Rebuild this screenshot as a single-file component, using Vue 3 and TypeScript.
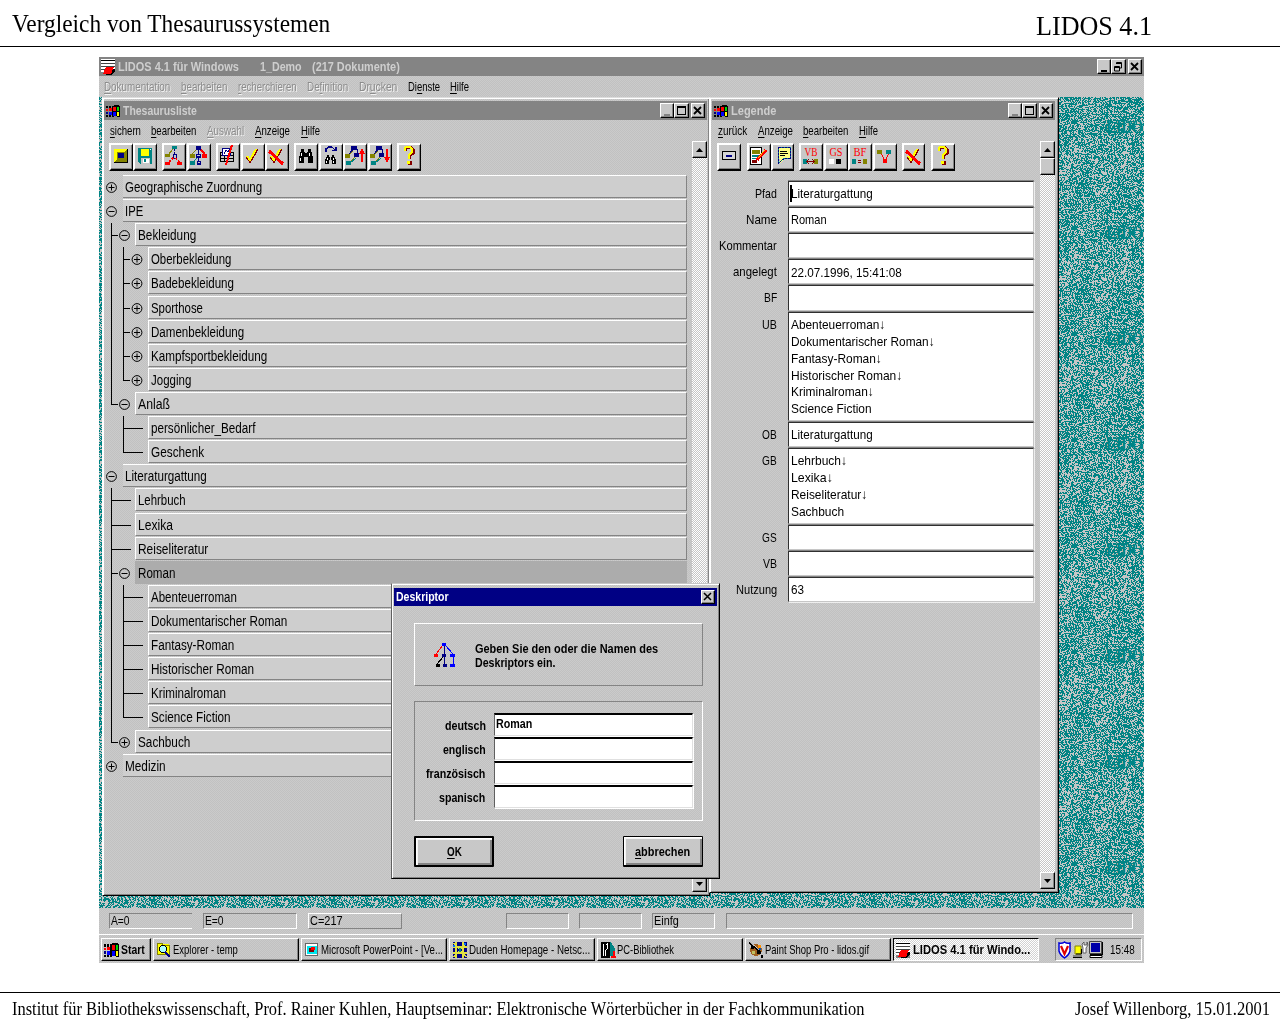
<script setup lang="ts">
interface MenuItem { pre: string; key: string; post: string; w: number; off?: boolean }
interface Node { t: string; w: number; level: number; sign?: '+' | '-'; last?: boolean; through?: boolean; selected?: boolean }

// Condenses a label horizontally to the pixel width given, keeping its place in the flow.
const vFit = {
  mounted(el: HTMLElement, binding: { value: number }) {
    const natural = el.offsetWidth
    el.style.transform = `scaleX(${binding.value / natural})`
    el.style.marginRight = `${binding.value - natural}px`
  },
}

const m = (pre: string, key: string, post: string, w: number, off = false): MenuItem => ({ pre, key, post, w, off })

const mainMenu = [
  m('', 'D', 'okumentation', 66, true), m('', 'b', 'earbeiten', 46, true), m('', 'r', 'echerchieren', 59, true),
  m('De', 'f', 'inition', 41, true), m('Dr', 'u', 'cken', 38, true), m('Di', 'e', 'nste', 32), m('', 'H', 'ilfe', 19),
]
const listMenu = [
  m('', 's', 'ichern', 31), m('', 'b', 'earbeiten', 45), m('', 'A', 'uswahl', 37, true), m('', 'A', 'nzeige', 35), m('', 'H', 'ilfe', 19),
]
const legendMenu = [m('', 'z', 'urück', 29), m('', 'A', 'nzeige', 35), m('', 'b', 'earbeiten', 45), m('', 'H', 'ilfe', 19)]

const nodes: Node[] = [
  { t: 'Geographische Zuordnung', w: 137, level: 0, sign: '+' },
  { t: 'IPE', w: 18, level: 0, sign: '-' },
  { t: 'Bekleidung', w: 58, level: 1, sign: '-' },
  { t: 'Oberbekleidung', w: 80, level: 2, sign: '+', through: true },
  { t: 'Badebekleidung', w: 83, level: 2, sign: '+', through: true },
  { t: 'Sporthose', w: 52, level: 2, sign: '+', through: true },
  { t: 'Damenbekleidung', w: 93, level: 2, sign: '+', through: true },
  { t: 'Kampfsportbekleidung', w: 116, level: 2, sign: '+', through: true },
  { t: 'Jogging', w: 40, level: 2, sign: '+', last: true, through: true },
  { t: 'Anlaß', w: 32, level: 1, sign: '-', last: true },
  { t: 'persönlicher_Bedarf', w: 104, level: 2 },
  { t: 'Geschenk', w: 53, level: 2, last: true },
  { t: 'Literaturgattung', w: 82, level: 0, sign: '-' },
  { t: 'Lehrbuch', w: 48, level: 1 },
  { t: 'Lexika', w: 35, level: 1 },
  { t: 'Reiseliteratur', w: 70, level: 1 },
  { t: 'Roman', w: 37, level: 1, sign: '-', selected: true },
  { t: 'Abenteuerroman', w: 86, level: 2, through: true },
  { t: 'Dokumentarischer Roman', w: 136, level: 2, through: true },
  { t: 'Fantasy-Roman', w: 83, level: 2, through: true },
  { t: 'Historischer Roman', w: 103, level: 2, through: true },
  { t: 'Kriminalroman', w: 75, level: 2, through: true },
  { t: 'Science Fiction', w: 80, level: 2, last: true, through: true },
  { t: 'Sachbuch', w: 52, level: 1, sign: '+', last: true },
  { t: 'Medizin', w: 41, level: 0, sign: '+' },
]
const gutter = [19, 31, 44]
const knob = [7.5, 20.5, 33]
const stem = [0, 7, 19]

const r = (x: number, y: number, w: number, h: number, f: string) => `<rect x="${x}" y="${y}" width="${w}" height="${h}" fill="${f}"/>`
const l = (d: string, c: string, w = 1, extra = '') => `<path d="${d}" fill="none" stroke="${c}" stroke-width="${w}" ${extra}/>`
const teal = '#008484', olive = '#848400', navy = '#000084', red = '#ff0000', yellow = '#ffff00', maroon = '#840000'

const check = l('M4 11L7 15L14 3', maroon, 3) + l('M4 10L7 14L13 3', yellow, 2)
const cross = check + l('M2 5L16 18', red, 3)
const question = l('M6 5V2.5L8 1.5H12L14 3.5V7L10.5 10V13', maroon, 3) + l('M5.5 5V2.5L7.5 1H11L13 3V6L9.5 9.5V13', yellow, 2) + r(9, 15, 4, 4, maroon) + r(8, 15, 3, 3, yellow)
const glasses = r(5, 3, 3, 3, '#000') + r(12, 3, 3, 3, '#000') + r(4, 6, 5, 5, '#000') + r(11, 6, 5, 5, '#000') + r(9, 7, 2, 4, '#000') + r(3, 10, 5, 7, '#000') + r(12, 10, 5, 7, '#000') + r(5, 7, 1, 3, '#fff') + r(13, 7, 1, 3, '#fff') + r(4, 12, 1, 3, '#fff')
const small = r(6, 9, 2, 2, '#000') + r(11, 9, 2, 2, '#000') + r(5, 11, 4, 3, '#000') + r(10, 11, 4, 3, '#000') + r(4, 13, 4, 5, '#000') + r(11, 13, 4, 5, '#000') + r(6, 12, 1, 2, '#fff') + r(12, 12, 1, 2, '#fff') + r(5, 15, 1, 2, '#fff') + r(12, 15, 1, 2, '#fff') + l('M5 6V3L8 1H11L14 4', navy, 1.4) + r(11, 4, 5, 1, navy) + r(14, 1, 2, 4, navy)
const branch = l('M9 3L4 9V12M12 3V10M10 11L4 17', olive) + l('M4 8L9 2M12 3V9', navy) + l('M11 12L4 18', teal) + r(6, 0, 6, 4, navy) + r(9, 7, 5, 4, navy) + r(0, 8, 5, 4, olive) + r(1, 15, 5, 4, teal)

const listTools = [
  { gap: 0, svg: r(3, 3, 14, 14, '#000') + r(3, 3, 13, 13, olive) + `<path d="M3 3H16L3 16Z" fill="${yellow}"/>` + r(6, 6, 8, 7, olive) + r(7, 7, 6, 5, navy) },
  { gap: 0, svg: `<path d="M3 2H16L17 3V18H5L3 16Z" fill="${teal}"/>` + r(6, 3, 8, 7, yellow) + r(15, 3, 1, 1, '#fff') + r(6, 12, 9, 6, '#c6c6c6') + r(8, 13, 6, 4, '#fff') + r(9, 13, 2, 3, teal) },
  { gap: 5, svg: l('M9 3L4 9', olive) + l('M10.5 3V8', navy, 1, 'stroke-dasharray="2 1"') + l('M9 8H12V12H9Z', navy) + l('M9 12L4 17M12 12L16 17', red, 1.5, 'stroke-dasharray="2 1"') + r(8, 0, 5, 3, teal) + r(1, 8, 5, 3, olive) + r(1, 16, 5, 3, red) + r(13, 16, 5, 3, red) },
  { gap: 1, svg: l('M8 3L3 8', olive) + l('M9.5 3V18M7 10H12', navy) + l('M11 3L16 8', red, 1.5) + l('M9 11L3 17', teal) + r(7, 0, 5, 4, navy) + r(1, 8, 5, 4, olive) + r(13, 8, 5, 4, red) + r(7, 8, 5, 4, navy) + r(8, 9, 3, 1, '#c6c6c6') + r(1, 15, 5, 4, teal) + r(8, 15, 4, 4, navy) + r(9, 16, 2, 1, '#c6c6c6') },
  { gap: 5, svg: l('M2.5 6.5H15.5V15.5H2.5ZM2 9.5H16M2 12.5H16M6.5 10V16', '#000') + r(4, 2, 9, 8, navy) + r(5, 3, 7, 6, '#fff') + l('M6 8L8 4L10 6L12 3', navy) + l('M14 -1L8 19', red, 2) },
  { gap: 1, svg: check },
  { gap: 0, svg: cross },
  { gap: 5, svg: glasses },
  { gap: 1, svg: small },
  { gap: 0, svg: branch + r(16, 5, 2, 11, red) + `<path d="M14 8L17 2L20 8Z" fill="${red}"/>` },
  { gap: 1, svg: branch + r(16, 3, 2, 10, red) + `<path d="M14 11H20L17 17Z" fill="${red}"/>` },
  { gap: 5, svg: question },
]
const rel = (t: string, low: string) => `<text x="10" y="10" text-anchor="middle" font-family="Liberation Serif, serif" font-size="12" textLength="13" lengthAdjust="spacingAndGlyphs" fill="${red}">${t}</text>` + low
const legendTools = [
  { gap: 0, svg: l('M3.5 5.5H16.5V13.5H3.5Z', '#000') + r(4, 6, 12, 7, '#d6d6d6') + r(7, 9, 6, 2, navy) },
  { gap: 6, svg: r(1, 1, 12, 18, '#000') + r(2, 2, 10, 16, '#fff') + r(3, 4, 8, 4, olive) + r(3, 9, 7, 2, teal) + r(3, 12, 5, 1, teal) + r(3, 14, 5, 3, maroon) + l('M17 4L8 14', red, 3) + l('M16 4L9 12', yellow, .8) },
  { gap: 0, svg: `<path d="M5 2H17V12H12L7 17V13H5Z" fill="#ffff84"/>` + l('M5.5 1.5H17.5V12.5H11L5.5 17Z', teal) + l('M5.5 1.5H17.5V12.5H11L5.5 17Z', navy, 1, 'stroke-dasharray="2 1"') + l('M7 5.5H14M7 7.5H15M7 9.5H12', '#000') },
  { gap: 5, svg: rel('VB', r(2, 13, 4, 5, teal) + r(13, 13, 4, 5, olive) + l('M5 15.5H14M8 13L6 15.5L8 18M11 13L13 15.5L11 18', maroon)) },
  { gap: 1, svg: rel('GS', r(3, 13, 5, 5, '#fff') + r(10, 13, 5, 5, '#000')) },
  { gap: 0, svg: rel('BF', r(2, 13, 4, 5, teal) + r(13, 13, 4, 5, olive) + l('M8 14.5H11M8 16.5H11', maroon)) },
  { gap: 1, svg: l('M5 5L10 15L15 5', red, 1.2) + r(2, 4, 5, 4, olive) + r(11, 4, 5, 4, teal) + r(8, 13, 4, 4, red) },
  { gap: 5, svg: cross },
  { gap: 6, svg: question },
]

interface Field { label: string; lw: number; h: number; lines: [string, number][]; caret?: boolean }
const fields: Field[] = [
  { label: 'Pfad', lw: 22, h: 26, lines: [['Literaturgattung', 82]], caret: true },
  { label: 'Name', lw: 31, h: 26, lines: [['Roman', 36]] },
  { label: 'Kommentar', lw: 58, h: 26.4, lines: [] },
  { label: 'angelegt', lw: 44, h: 26, lines: [['22.07.1996, 15:41:08', 111]] },
  { label: 'BF', lw: 13, h: 26.4, lines: [] },
  { label: 'UB', lw: 15, h: 110, lines: [['Abenteuerroman↓', 94], ['Dokumentarischer Roman↓', 144], ['Fantasy-Roman↓', 91], ['Historischer Roman↓', 111], ['Kriminalroman↓', 83], ['Science Fiction', 81]] },
  { label: 'OB', lw: 15, h: 26, lines: [['Literaturgattung', 82]] },
  { label: 'GB', lw: 15, h: 77, lines: [['Lehrbuch↓', 56], ['Lexika↓', 42], ['Reiseliteratur↓', 76], ['Sachbuch', 53]] },
  { label: 'GS', lw: 15, h: 26, lines: [] },
  { label: 'VB', lw: 14, h: 26, lines: [] },
  { label: 'Nutzung', lw: 41, h: 26, lines: [['63', 13]] },
]

const winLogo = r(0, 1, 2, 2, '#000') + r(0, 4, 2, 2, red) + r(0, 7, 2, 2, navy) + r(0, 10, 2, 2, '#000') + r(3, 1, 2, 2, '#000') + r(3, 3, 3, 3, red) + r(3, 7, 3, 3, '#0000ff') + r(3, 10, 2, 2, '#000') + `<path d="M6 1L9 0H13L14 2V12H12L10 11L6 12Z" fill="#000"/>` + r(7, 2, 3, 4, red) + r(11, 2, 2, 4, '#00d800') + r(7, 7, 3, 4, '#0000ff') + r(11, 7, 2, 4, yellow)
const lidosLogo = r(0, 0, 14, 16, '#fff') + r(0, 1, 14, 1, '#000') + r(0, 4, 14, 1, '#444') + r(0, 7, 14, 1, '#444') + r(0, 10, 4, 1, '#444') + r(0, 13, 14, 3, '#848484') + `<path d="M9 11L14 10V13L10 16H5Z" fill="#000"/><path d="M5 8H13L10 15H2Z" fill="${red}"/>`
const tasks = [
  { t: 'Explorer - temp', w: 65, svg: r(1, 2, 11, 11, yellow) + l('M.5 1.5H5L6 3H12.5V12.5H.5Z', olive) + `<circle cx="6" cy="7" r="3.4" fill="#aff" stroke="#000"/>` + l('M8 10L13 15', navy, 2.5) },
  { t: 'Microsoft PowerPoint - [Ve...', w: 122, svg: r(0, 1, 13, 13, '#fff') + l('M.5 1.5H12.5V13.5H.5Z', '#666') + r(2, 4, 10, 8, '#00e8f0') + r(4, 6, 5, 4, maroon) + r(6, 5, 4, 3, red) },
  { t: 'Duden Homepage - Netsc...', w: 121, svg: r(0, 0, 14, 16, navy) + l('M1 1L13 15M13 1L1 15M3 0V16M10 0V16M0 5H14M0 11H14', '#e0e040', 1.4) + r(6, 6, 2, 4, teal) + r(0, 3, 2, 2, '#0070ff') + r(11, 1, 2, 2, '#0070ff') },
  { t: 'PC-Bibliothek', w: 57, svg: r(0, 0, 9, 16, '#000') + l('M2 2V14M5 3L6 2V7L4 9V14', '#fff') + `<path d="M9 0Q14 4 14 9L13 14H9Z" fill="${teal}"/>` + r(12, 9, 2, 6, red) + r(10, 14, 5, 2, red) },
  { t: 'Paint Shop Pro - lidos.gif', w: 104, svg: `<circle cx="7" cy="8" r="6" fill="#a06020"/>` + r(2, 4, 3, 3, '#000') + r(8, 9, 3, 3, '#000') + r(9, 3, 3, 3, '#ff9000') + r(3, 9, 3, 3, '#c0c060') + r(10, 6, 2, 2, '#0050c0') + l('M0 0L12 11', '#000', 2) + l('M1 0L10 8', '#fff', .7) + r(12, 13, 2, 3, '#000') },
  { t: 'LIDOS 4.1 für Windo...', w: 117, svg: lidosLogo },
]

const inputs = [
  { t: 'deutsch', w: 41, v: 'Roman' },
  { t: 'englisch', w: 43, v: '' },
  { t: 'französisch', w: 59, v: '' },
  { t: 'spanisch', w: 46, v: '' },
]
const panes = [
  { t: 'A=0', tw: 19, w: 83, ml: 10, k: 'open' },
  { t: 'E=0', tw: 19, w: 94, ml: 11, k: 'in' },
  { t: 'C=217', tw: 33, w: 94, ml: 11, k: 'out' },
  { t: '', tw: 0, w: 63, ml: 104, k: 'in' },
  { t: '', tw: 0, w: 63, ml: 10, k: 'in' },
  { t: 'Einfg', tw: 25, w: 63, ml: 10, k: 'in' },
  { t: '', tw: 0, w: 407, ml: 11, k: 'in' },
]

// Speckled wallpaper tile: deterministic one-pixel grey specks on teal.
const TW = 90, TH = 106
let seed = 4711
const rnd = () => { seed = (seed * 1103515245 + 12345) % 2147483648; return seed / 2147483648 }
let specks = ''
for (let y = 0; y < TH; y++) {
  for (let x = 0; x < TW; x++) {
    const band = Math.exp(-Math.pow((y - 68) / 9, 2)) * (0.1 + 0.08 * Math.sin(x / 5))
    if (rnd() < 0.4 + band + 0.04 * Math.sin(x / 8 + y / 13)) specks += `M${x} ${y}h1v1h-1z`
  }
}
const marks = [0, 1, 2, 3, 4, 5, 6, 7]
</script>

<template>
  <div class="page">
    <header class="head">
      <span v-fit="318" class="t">Vergleich von Thesaurussystemen</span>
      <span v-fit="116" class="t lidos">LIDOS 4.1</span>
    </header>

    <main class="screen gray">
      <div class="bar main-bar">
        <svg class="ico" width="14" height="16" viewBox="0 0 14 16" v-html="lidosLogo" />
        <span v-fit="121" class="t">LIDOS 4.1 für Windows</span>
        <span v-fit="42" class="t demo">1_Demo</span>
        <span v-fit="88" class="t docs">(217 Dokumente)</span>
        <span class="ctl"><i class="cb"><b class="min" /></i><i class="cb"><svg width="10" height="10"><path d="M3.5 1V.5H8.5V6H6M3 1.5H9M1.5 4.5H6.5V9H1.5ZM1 5.5H7" fill="none" stroke="#000" /></svg></i><i class="cb sep"><svg width="10" height="10"><path d="M1 1L8 8M8 1L1 8" stroke="#000" stroke-width="1.8" /></svg></i></span>
      </div>
      <nav class="menu main-menu">
        <span v-for="i in mainMenu" :key="i.key + i.post" v-fit="i.w" class="t" :class="{ off: i.off }">{{ i.pre }}<u>{{ i.key }}</u>{{ i.post }}</span>
      </nav>

      <div class="mdi">
        <svg class="wall" width="1045" height="811">
          <defs><pattern id="speck" :width="TW" :height="TH" patternUnits="userSpaceOnUse"><rect :width="TW" :height="TH" fill="#008484" /><path :d="specks" fill="#c6c6c6" /></pattern></defs>
          <rect width="1045" height="811" fill="url(#speck)" />
          <text v-for="n in marks" :key="n" x="1007" :y="36 + n * 105.8" class="mark" textLength="37" lengthAdjust="spacingAndGlyphs">LIDO</text>
        </svg>

        <section class="win list gray">
          <div class="bar">
            <svg class="ico" width="14" height="12" viewBox="0 0 14 12" v-html="winLogo" />
            <span v-fit="74" class="t">Thesaurusliste</span>
            <span class="ctl"><i class="cb"><b class="min dim" /></i><i class="cb"><b class="max" /></i><i class="cb sep"><svg width="10" height="10"><path d="M1 1L8 8M8 1L1 8" stroke="#000" stroke-width="1.8" /></svg></i></span>
          </div>
          <div class="cols">
            <div class="pane">
              <nav class="menu"><span v-for="(i, n) in listMenu" :key="n" v-fit="i.w" class="t" :class="{ off: i.off }">{{ i.pre }}<u>{{ i.key }}</u>{{ i.post }}</span></nav>
              <div class="tools">
                <i v-for="(b, n) in listTools" :key="n" class="tool" :style="{ marginLeft: b.gap + 'px' }"><svg width="20" height="20" viewBox="0 0 20 20" v-html="b.svg" /></i>
              </div>
              <div class="tree">
                <div v-for="n in nodes" :key="n.t" class="node">
                  <svg class="gut" :width="gutter[n.level]" height="24.2">
                    <g fill="none" stroke="#000" shape-rendering="crispEdges">
                      <path v-if="n.through" d="M7.5 0V25" />
                      <path v-if="n.level" :d="`M${stem[n.level] + .5} 0V${n.last ? 12.5 : 25}M${stem[n.level]} 12.5H${n.sign ? stem[n.level] + 7 : stem[n.level] + 20}`" />
                    </g>
                    <g v-if="n.sign" fill="none" stroke="#000">
                      <circle :cx="knob[n.level]" cy="12.5" r="4.9" />
                      <path :d="`M${knob[n.level] - 3} 12.5h6` + (n.sign === '+' ? `M${knob[n.level]} 9.5v6` : '')" />
                    </g>
                  </svg>
                  <div class="cell" :class="{ sel: n.selected, edge: n.level }"><span v-fit="n.w" class="t">{{ n.t }}</span></div>
                </div>
              </div>
            </div>
            <div class="scroll"><i class="arrow"><svg width="7" height="4"><path d="M3.5 0L7 4H0Z" /></svg></i><i class="arrow"><svg width="7" height="4"><path d="M0 0H7L3.5 4Z" /></svg></i></div>
          </div>
        </section>

        <section class="win legend gray">
          <div class="bar">
            <svg class="ico" width="14" height="12" viewBox="0 0 14 12" v-html="winLogo" />
            <span v-fit="45" class="t">Legende</span>
            <span class="ctl"><i class="cb"><b class="min dim" /></i><i class="cb"><b class="max" /></i><i class="cb sep"><svg width="10" height="10"><path d="M1 1L8 8M8 1L1 8" stroke="#000" stroke-width="1.8" /></svg></i></span>
          </div>
          <div class="cols">
            <div class="pane">
              <nav class="menu"><span v-for="(i, n) in legendMenu" :key="n" v-fit="i.w" class="t">{{ i.pre }}<u>{{ i.key }}</u>{{ i.post }}</span></nav>
              <div class="tools">
                <i v-for="(b, n) in legendTools" :key="n" class="tool" :style="{ marginLeft: b.gap + 'px' }"><svg width="20" height="20" viewBox="0 0 20 20" v-html="b.svg" /></i>
              </div>
              <div class="form">
                <div v-for="f in fields" :key="f.label" class="field" :style="{ height: f.h + 'px' }">
                  <div class="lab"><span v-fit="f.lw" class="t">{{ f.label }}</span></div>
                  <div class="box" :class="{ caret: f.caret }"><div v-for="x in f.lines" :key="x[0]" class="line"><span v-fit="x[1]" class="t">{{ x[0] }}</span></div></div>
                </div>
              </div>
            </div>
            <div class="scroll"><div><i class="arrow"><svg width="7" height="4"><path d="M3.5 0L7 4H0Z" /></svg></i><i class="arrow" /></div><i class="arrow"><svg width="7" height="4"><path d="M0 0H7L3.5 4Z" /></svg></i></div>
          </div>
        </section>

        <section class="dialog gray">
          <div class="dbar"><span v-fit="53" class="t">Deskriptor</span><i class="cb"><svg width="10" height="10"><path d="M1 1L8 8M8 1L1 8" stroke="#000" stroke-width="1.5" /></svg></i></div>
          <div class="info">
            <svg width="24" height="26" shape-rendering="crispEdges"><path d="M10 3L3 12" stroke="#f00" /><path d="M12 3L20 12M20.5 14V23" stroke="#00f" fill="none" /><path d="M11.5 2V24" stroke="#000084" /><path d="M11 14L4 22" stroke="#000" /><path d="M9 1h4v3h-4zM17 12h5v3h-5zM17 22h5v3h-5z" fill="#00f" /><path d="M1 12h4v3h-4z" fill="#f00" /><path d="M9 12h4v3h-4zM10 22h4v3h-4z" fill="#000084" /><path d="M3 22h4v3h-4z" /></svg>
            <p><span v-fit="183" class="t">Geben Sie den oder die Namen des</span><br><span v-fit="80" class="t">Deskriptors ein.</span></p>
          </div>
          <div class="names">
            <div v-for="i in inputs" :key="i.t" class="nrow"><div class="nlab"><span v-fit="i.w" class="t">{{ i.t }}</span></div><div class="nbox"><span v-if="i.v" v-fit="36" class="t">{{ i.v }}</span></div></div>
          </div>
          <div class="btns">
            <div class="btn def"><span v-fit="15" class="t"><u>O</u>K</span></div>
            <div class="btn"><span v-fit="55" class="t"><u>a</u>bbrechen</span></div>
          </div>
        </section>
      </div>

      <div class="status">
        <div v-for="(p, n) in panes" :key="n" class="sp" :class="p.k" :style="{ width: p.w + 'px', marginLeft: p.ml + 'px' }"><span v-if="p.t" v-fit="p.tw" class="t">{{ p.t }}</span></div>
      </div>

      <div class="taskbar">
        <div class="task start"><svg width="15" height="14" viewBox="0 0 14 12" preserveAspectRatio="none" v-html="winLogo" /><span v-fit="24" class="t">Start</span></div>
        <div v-for="(k, n) in tasks" :key="k.t" class="task" :class="{ active: n === 5 }"><svg width="15" height="16" v-html="k.svg" /><span v-fit="k.w" class="t">{{ k.t }}</span></div>
        <div class="tray">
          <svg width="46" height="18">
            <path d="M1 2Q4 3 6.5 1Q9 3 12 2V10Q11 14 6.5 17Q2 14 1 10Z" fill="#fff" stroke="#0000d8" stroke-width="1.5" /><path d="M3 5L6.5 13L10 5" fill="none" stroke="#e00000" stroke-width="2.2" />
            <path d="M17 5h6v8h-6z" fill="#ffff00" stroke="#848400" /><path d="M15 14h9v3h-9z" fill="#848484" /><path d="M15 16.5h9M23.5 8V13H18" stroke="#000" fill="none" />
            <path d="M24 3l2-2v3h3v-3l1 3-2 3v5h-3v-5z" fill="#fff" stroke="#444" stroke-width=".8" />
            <path d="M32 1h13v13h-13z" fill="#000" /><path d="M31.5 .5h12v12h-12z" fill="#c6c6c6" stroke="#444" /><path d="M33 2h9v9h-9z" fill="#0000a8" /><path d="M32 14.5h12v2h-12z" fill="#fff" stroke="#000" />
          </svg>
          <span v-fit="25" class="t">15:48</span>
        </div>
      </div>
    </main>

    <footer class="foot">
      <span v-fit="852" class="t">Institut für Bibliothekswissenschaft, Prof. Rainer Kuhlen, Hauptseminar: Elektronische Wörterbücher in der Fachkommunikation</span>
      <span v-fit="195" class="t">Josef Willenborg, 15.01.2001</span>
    </footer>
  </div>
</template>

<style>
body { margin: 0; background: #fff; }
</style>

<style scoped>
.page, .page * { box-sizing: border-box; }
.page { width: 1280px; height: 1024px; display: flex; flex-direction: column; overflow: hidden; color: #000; background: #fff; }
.t { display: inline-block; flex: none; white-space: pre; transform-origin: 0 50%; }
u { text-decoration: underline; text-underline-offset: 2px; text-decoration-thickness: 1px; text-decoration-skip-ink: none; }
i { font-style: normal; }
svg { display: block; flex: none; }
.gray { background: repeating-conic-gradient(#c1c1c1 0 25%, #cbcbcb 0 50%) 0 0 / 2px 2px; }

.head { flex: none; height: 47px; border-bottom: 1px solid #000; padding: 2px 128px 0 12px; display: flex; justify-content: space-between; align-items: center; font: 26px/44px "Liberation Serif", "Times New Roman", serif; }
.lidos { font-size: 27px; padding-top: 3px; }
.foot { margin-top: 29px; flex: none; height: 32px; border-top: 1px solid #000; padding: 0 10px 0 12px; display: flex; justify-content: space-between; font: 18px/33px "Liberation Serif", "Times New Roman", serif; }

.screen { flex: none; width: 1045px; height: 906px; margin: 10px 0 0 99px; display: flex; flex-direction: column; font: 13.5px/16px "Liberation Sans", Arial, sans-serif; }
.bar { flex: none; height: 19px; background: #848484; color: #cecece; display: flex; align-items: center; font-weight: bold; font-size: 13px; padding-right: 2px; }
.main-bar { padding-left: 2px; }
.ico { margin-right: 3px; shape-rendering: crispEdges; }
.win .bar .ico { margin-left: 2px; }
.demo { margin-left: 21px; }
.docs { margin-left: 11px; }
.ctl { margin-left: auto; display: flex; }
.cb { width: 14.5px; height: 15px; background: #c8c8c8; border: 1px solid; border-color: #fff #000 #000 #fff; box-shadow: inset -1px -1px 0 #848484; display: flex; align-items: center; justify-content: center; }
.cb.sep { margin-left: 2px; }
.min { width: 6px; height: 2px; background: #000; margin-top: 8px; }
.min.dim { background: #848484; }
.max { width: 9px; height: 9px; border: 1px solid #000; border-top-width: 2px; }

.menu { display: flex; align-items: center; gap: 10.5px; height: 21px; padding-left: 6px; font-size: 13px; }
.main-menu { flex: none; padding-left: 5px; }
.off { color: #8c8c8c; text-shadow: 1px 1px 0 #f4f4f4; }

.mdi { position: relative; flex: none; height: 811px; overflow: hidden; }
.wall { width: 1045px; height: 811px; }
.mark { font: bold 19px "Liberation Serif", serif; fill: #008484; }
.win { position: absolute; display: flex; flex-direction: column; border: 1px solid; border-color: #dcdcdc #000 #000 #fff; box-shadow: inset 1px 1px 0 #fff, inset -1px -1px 0 #848484; }
.list { left: 3px; top: 0; width: 608px; height: 799px; padding: 3px 2px 1px 1px; }
.legend { left: 610px; top: 0; width: 350px; height: 796px; padding: 3px 3px 1px 2px; }
.cols { flex: 1; display: flex; min-height: 0; }
.pane { flex: 1; min-width: 0; }
.tools { display: flex; padding: 2px 0 0 5px; height: 30px; }
.tool { width: 24px; height: 28px; border: 2px solid; border-color: #fff #000 #000 #fff; border-width: 2px 1px 2px 2px; box-shadow: inset -1px -1px 0 #848484; background: #c8c8c8; padding-top: 1px; }
.tool svg { shape-rendering: crispEdges; overflow: visible; }
.legend .tool { width: 23.8px; }
.scroll { flex: none; width: 15px; margin: 21px 0 2px; display: flex; flex-direction: column; justify-content: space-between; background: repeating-conic-gradient(#fff 0 25%, #c6c6c6 0 50%) 0 0 / 2px 2px; }
.arrow { display: flex; width: 15px; height: 17px; align-items: center; justify-content: center; background: #c8c8c8; border: 1px solid; border-color: #fff #000 #000 #fff; box-shadow: inset -1px -1px 0 #848484; }

.tree { padding: 4px 5px 0 0; font-size: 13.8px; }
.node { display: flex; height: 24.12px; }
.gut { height: 24.2px; overflow: visible; }
.cell { flex: 1; height: 23px; background: #cecece; border-top: 1px solid #fff; border-bottom: 1px solid #848484; border-right: 1px solid #848484; display: flex; align-items: center; padding: 3px 0 0 2px; }
.cell.edge { border-left: 1px solid #fff; }
.cell.sel { background: #acacac; border-color: #acacac; }

.form { padding: 10px 6px 0 0; }
.field { display: flex; padding-bottom: 1px; }
.lab { width: 65px; margin-right: 11px; display: flex; justify-content: flex-end; padding-top: 5px; }
.box { position: relative; flex: 1; background: #fff; border: 1px solid; border-color: #303030 #c6c6c6 #c6c6c6 #303030; box-shadow: 1px 1px 0 #eee, 0 -1px 0 #848484; padding: 4px 0 0 2px; }
.line { height: 16.8px; display: flex; align-items: center; }
.caret::before { content: ""; position: absolute; left: 1px; top: 3px; width: 2px; height: 17px; background: #000; }

.dialog { position: absolute; left: 292px; top: 486px; width: 329px; height: 296px; border: 1px solid; border-color: #c6c6c6 #000 #000 #606060; box-shadow: inset 1px 1px 0 #fff, inset -1px -1px 0 #848484; padding: 4px 2px 0; font-weight: bold; font-size: 12.5px; line-height: 14px; display: flex; flex-direction: column; }
.dbar { height: 18px; background: #000084; color: #fff; display: flex; align-items: center; justify-content: space-between; padding: 0 2px; }
.dbar .cb { height: 14px; }
.info { margin: 17px 14px 0 20px; height: 63px; border: 1px solid; border-color: #fff #848484 #848484 #fff; display: flex; align-items: center; padding-left: 18px; }
.info p { margin: 4px 0 0 18px; line-height: 13.5px; }
.info .t { line-height: 13.5px; vertical-align: top; }
.names { margin: 15px 14px 0 20px; height: 120px; border: 1px solid; border-color: #848484 #fff #fff #848484; padding: 11px 9px 0 0; display: flex; flex-direction: column; }
.nrow { height: 24.1px; display: flex; }
.nlab { width: 70.5px; margin-right: 8.5px; display: flex; justify-content: flex-end; padding-top: 5.5px; }
.nbox { flex: 1; height: 23px; background: #fff; border: 1px solid; border-top-width: 2px; border-color: #000 #e0e0e0 #e0e0e0 #606060; box-shadow: 1px 1px 0 #fff; padding: 2px 0 0 1px; line-height: 14px; }
.btns { margin: 15px 14px 0 20px; display: flex; justify-content: space-between; }
.btn { width: 80px; height: 31px; border: 1px solid #000; border-bottom-width: 2px; border-radius: 1px; background: #c8c8c8; box-shadow: inset 1px 1px 0 #fff, inset 2px 2px 0 #f4f4f4, inset -2px -2px 0 #848484; display: flex; align-items: center; justify-content: center; padding-top: 1px; }
.btn.def { border-width: 2px; }

.status { flex: none; height: 27px; display: flex; padding-top: 5px; border-bottom: 1px solid #fff; font-size: 13px; }
.sp { flex: none; height: 16px; border: 1px solid; border-color: #848484 #fff #fff #848484; padding-left: 1px; line-height: 14px; }
.sp.open { border-right: 0; }
.sp.out { border-color: #fff #848484 #848484 #fff; }

.taskbar { flex: none; height: 28px; display: flex; padding: 3px 2px 0; gap: 2px; font-size: 13px; }
.task { flex: none; width: 146px; height: 23px; border: 1px solid; border-color: #fff #000 #000 #fff; box-shadow: inset -1px -1px 0 #848484; display: flex; align-items: center; gap: 1px; padding-left: 3px; }
.task svg { shape-rendering: crispEdges; }
.start { width: 50px; font-weight: bold; padding-left: 2px; gap: 2px; }
.task.active { border-color: #000 #fff #fff #000; font-weight: bold; box-shadow: none; background: repeating-conic-gradient(#fff 0 25%, #d2d2d2 0 50%) 0 0 / 2px 2px; padding-left: 2px; gap: 2px; }
.tray { margin-left: auto; width: 87px; height: 23px; border: 1px solid; border-color: #848484 #fff #fff #848484; display: flex; align-items: center; padding: 0 6px 0 2px; justify-content: space-between; }
</style>
